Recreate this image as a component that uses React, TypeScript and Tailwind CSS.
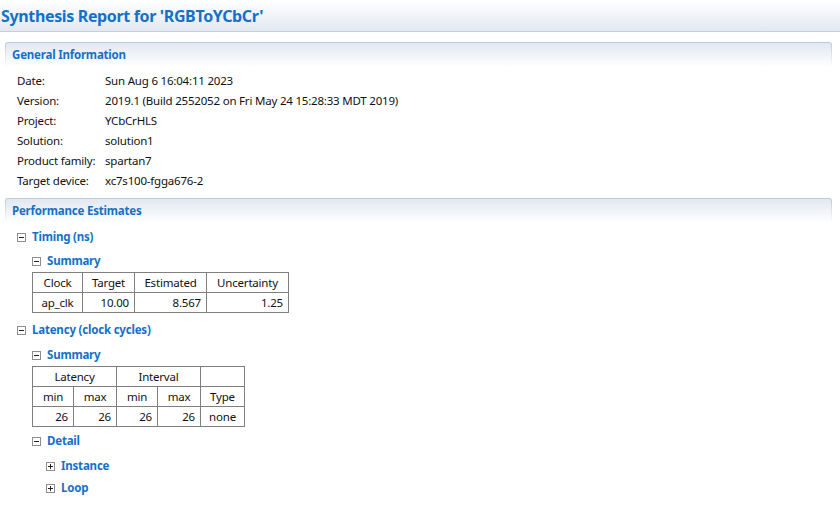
import React from "react";

const FONT = { fontFamily: '"Noto Sans", "Open Sans", sans-serif' };

function Toggle({ plus }: { plus?: boolean }) {
  return (
    <span className="relative inline-block w-[9px] h-[9px] border border-[#8e8e8e] bg-white shrink-0">
      <span className="absolute left-[1px] top-[3px] w-[5px] h-[1px] bg-[#222]" />
      {plus && <span className="absolute left-[3px] top-[1px] w-[1px] h-[5px] bg-[#222]" />}
    </span>
  );
}

function SectionHeader({ title }: { title: string }) {
  return (
    <div className="mr-[8px] rounded-t-[3px] bg-gradient-to-b from-[#b5cadf] to-white pt-[1px] px-[1px]">
      <div className="h-[24px] rounded-t-[2px] bg-gradient-to-b from-[#e2e8f1] to-white flex items-center pl-[6px] text-[11.5px] tracking-[-0.2px] font-bold text-[#1570c8]">
        {title}
      </div>
    </div>
  );
}

function TreeRow({ indent, label, plus, className = "" }: { indent: number; label: string; plus?: boolean; className?: string }) {
  return (
    <div className={"h-[20px] flex items-center " + className} style={{ paddingLeft: indent }}>
      <Toggle plus={plus} />
      <span className="ml-[6px] text-[11.5px] tracking-[-0.2px] font-bold text-[#1570c8]">{label}</span>
    </div>
  );
}

const cell = "border border-[#7f7f7f] h-[20px] px-[5px] text-[11.5px] tracking-[-0.2px] text-[#111] leading-none";

export default function App() {
  const info: [string, string][] = [
    ["Date:", "Sun Aug 6 16:04:11 2023"],
    ["Version:", "2019.1 (Build 2552052 on Fri May 24 15:28:33 MDT 2019)"],
    ["Project:", "YCbCrHLS"],
    ["Solution:", "solution1"],
    ["Product family:", "spartan7"],
    ["Target device:", "xc7s100-fgga676-2"],
  ];
  return (
    <div className="w-[840px] h-[510px] bg-white overflow-hidden" style={FONT}>
      <div className="h-[32px] border-b border-[#c3cfdc] bg-gradient-to-b from-white to-[#e3e8f1] flex items-center pl-[1px]">
        <span className="text-[16px] font-bold text-[#1570c8] tracking-[-0.35px]">Synthesis Report for 'RGBToYCbCr'</span>
      </div>
      <div className="pl-[5px] pt-[10px]">
        <SectionHeader title="General Information" />
        <div className="pt-[4px] pl-[12px]">
          {info.map(([k, v]) => (
            <div key={k} className="h-[20px] flex items-center text-[11.5px] tracking-[-0.2px] text-[#111]">
              <span className="w-[88px]">{k}</span>
              <span>{v}</span>
            </div>
          ))}
        </div>
        <div className="mt-[7px]">
          <SectionHeader title="Performance Estimates" />
        </div>
        <div className="pt-[4px]">
          <TreeRow indent={12} label="Timing (ns)" />
          <TreeRow indent={27} label="Summary" className="mt-[4px]" />
          <table className="ml-[27px] mt-[1px] border-collapse">
            <tbody>
              <tr>
                <td className={cell + " w-[50px] text-center"}>Clock</td>
                <td className={cell + " w-[52px] text-center"}>Target</td>
                <td className={cell + " w-[72px] text-center"}>Estimated</td>
                <td className={cell + " w-[82px] text-center"}>Uncertainty</td>
              </tr>
              <tr>
                <td className={cell + " text-center"}>ap_clk</td>
                <td className={cell + " text-right"}>10.00</td>
                <td className={cell + " text-right"}>8.567</td>
                <td className={cell + " text-right"}>1.25</td>
              </tr>
            </tbody>
          </table>
          <TreeRow indent={12} label="Latency (clock cycles)" className="mt-[7px]" />
          <TreeRow indent={27} label="Summary" className="mt-[5px]" />
          <table className="ml-[27px] mt-[1px] border-collapse">
            <tbody>
              <tr>
                <td colSpan={2} className={cell + " text-center"}>Latency</td>
                <td colSpan={2} className={cell + " text-center"}>Interval</td>
                <td className={cell}></td>
              </tr>
              <tr>
                <td className={cell + " w-[41px] text-center"}>min</td>
                <td className={cell + " w-[43px] text-center"}>max</td>
                <td className={cell + " w-[41px] text-center"}>min</td>
                <td className={cell + " w-[43px] text-center"}>max</td>
                <td className={cell + " w-[44px] text-center"}>Type</td>
              </tr>
              <tr>
                <td className={cell + " text-right"}>26</td>
                <td className={cell + " text-right"}>26</td>
                <td className={cell + " text-right"}>26</td>
                <td className={cell + " text-right"}>26</td>
                <td className={cell + " text-center"}>none</td>
              </tr>
            </tbody>
          </table>
          <TreeRow indent={27} label="Detail" className="mt-[4px]" />
          <TreeRow indent={41} label="Instance" plus className="mt-[5px]" />
          <TreeRow indent={41} label="Loop" plus className="mt-[2px]" />
        </div>
      </div>
    </div>
  );
}
